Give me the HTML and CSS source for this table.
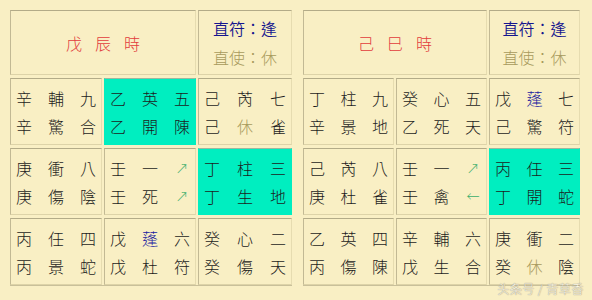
FILE: index.html
```html
<!DOCTYPE html>
<html lang="zh-Hant">
<head>
<meta charset="utf-8">
<link rel="stylesheet" href="styles.css">
</head>
<body>
<div class="page">
  <div class="chart chart-left">
    <div class="cell head-title"><span>戊</span><span>辰</span><span>時</span></div>
    <div class="cell head-info"><div class="fu">直符：逢</div><div class="shi">直使：休</div></div>

    <div class="cell"><div class="ln"><span>辛</span><span>輔</span><span>九</span></div><div class="ln"><span>辛</span><span>驚</span><span>合</span></div></div>
    <div class="cell hl"><div class="ln"><span>乙</span><span>英</span><span>五</span></div><div class="ln"><span>乙</span><span>開</span><span>陳</span></div></div>
    <div class="cell"><div class="ln"><span>己</span><span>芮</span><span>七</span></div><div class="ln"><span>己</span><span class="olive">休</span><span>雀</span></div></div>

    <div class="cell"><div class="ln"><span>庚</span><span>衝</span><span>八</span></div><div class="ln"><span>庚</span><span>傷</span><span>陰</span></div></div>
    <div class="cell"><div class="ln"><span>壬</span><span>一</span><span class="arrow">↗</span></div><div class="ln"><span>壬</span><span>死</span><span class="arrow">↗</span></div></div>
    <div class="cell hl"><div class="ln"><span>丁</span><span>柱</span><span>三</span></div><div class="ln"><span>丁</span><span>生</span><span>地</span></div></div>

    <div class="cell"><div class="ln"><span>丙</span><span>任</span><span>四</span></div><div class="ln"><span>丙</span><span>景</span><span>蛇</span></div></div>
    <div class="cell"><div class="ln"><span>戊</span><span class="blue">蓬</span><span>六</span></div><div class="ln"><span>戊</span><span>杜</span><span>符</span></div></div>
    <div class="cell"><div class="ln"><span>癸</span><span>心</span><span>二</span></div><div class="ln"><span>癸</span><span>傷</span><span>天</span></div></div>
  </div>

  <div class="chart chart-right">
    <div class="cell head-title"><span>己</span><span>巳</span><span>時</span></div>
    <div class="cell head-info"><div class="fu">直符：逢</div><div class="shi">直使：休</div></div>

    <div class="cell"><div class="ln"><span>丁</span><span>柱</span><span>九</span></div><div class="ln"><span>辛</span><span>景</span><span>地</span></div></div>
    <div class="cell"><div class="ln"><span>癸</span><span>心</span><span>五</span></div><div class="ln"><span>乙</span><span>死</span><span>天</span></div></div>
    <div class="cell"><div class="ln"><span>戊</span><span class="blue">蓬</span><span>七</span></div><div class="ln"><span>己</span><span>驚</span><span>符</span></div></div>

    <div class="cell"><div class="ln"><span>己</span><span>芮</span><span>八</span></div><div class="ln"><span>庚</span><span>杜</span><span>雀</span></div></div>
    <div class="cell"><div class="ln"><span>壬</span><span>一</span><span class="arrow">↗</span></div><div class="ln"><span>壬</span><span>禽</span><span class="arrow">←</span></div></div>
    <div class="cell hl"><div class="ln"><span>丙</span><span>任</span><span>三</span></div><div class="ln"><span>丁</span><span>開</span><span>蛇</span></div></div>

    <div class="cell"><div class="ln"><span>乙</span><span>英</span><span>四</span></div><div class="ln"><span>丙</span><span>傷</span><span>陳</span></div></div>
    <div class="cell"><div class="ln"><span>辛</span><span>輔</span><span>六</span></div><div class="ln"><span>戊</span><span>生</span><span>合</span></div></div>
    <div class="cell"><div class="ln"><span>庚</span><span>衝</span><span>二</span></div><div class="ln"><span>癸</span><span class="olive">休</span><span>陰</span></div></div>
  </div>
</div>
<div class="watermark">头条号 / 青草香</div>
</body>
</html>
```

FILE: styles.css
```css
html, body {
  margin: 0;
  padding: 0;
  background: #f9efc4;
}
body {
  width: 592px;
  height: 300px;
  overflow: hidden;
  position: relative;
  font-family: "Noto Sans CJK TC", "Noto Sans CJK SC", sans-serif;
  font-weight: 300;
  font-size: 16px;
  color: #1c1c1c;
}
.page {
  display: flex;
  gap: 11px;
  padding: 10px 0 0 10px;
}
.chart {
  display: grid;
  grid-template-rows: 65px 67px 67px 67px;
  column-gap: 2px;
  row-gap: 3px;
  border-bottom: 1px solid #c9c09a;
}
.chart-left { grid-template-columns: 92px 92px 94px; }
.chart-right { grid-template-columns: 91px 91px 91px; }
.cell {
  box-sizing: border-box;
  border-top: 1px solid #b3ab88;
  border-left: 1px solid #c2b994;
  border-right: 1px solid #e6dcb0;
  border-bottom: 1px solid #ddd3a8;
  display: flex;
  flex-direction: column;
  justify-content: center;
}
.cell.hl {
  background: #00eec0;
  border-color: #00eec0;
  border-top-color: #9cb8a0;
}
.ln {
  display: flex;
  justify-content: space-between;
  padding: 0 5px;
  height: 28px;
  line-height: 28px;
}
.ln span {
  width: 16px;
  text-align: center;
}
.head-title {
  grid-column: span 2;
  flex-direction: row;
  align-items: center;
  justify-content: center;
  gap: 13px;
  color: #e23c3c;
}
.head-info {
  align-items: center;
}
.head-info .fu {
  color: #15158e;
  line-height: 29px;
  font-weight: 350;
}
.head-info .shi {
  color: #a89a5c;
  line-height: 29px;
}
.blue { color: #2020a0; }
.olive { color: #a89a5c; }
.arrow { color: #3cae6c; font-size: 13px; }
.watermark {
  position: absolute;
  right: 8px;
  bottom: 3px;
  font-size: 12px;
  color: #fbf6e4;
  text-shadow: 0 0 1px #9a9480, 0 0 1px #9a9480;
  letter-spacing: 0.5px;
}
```
